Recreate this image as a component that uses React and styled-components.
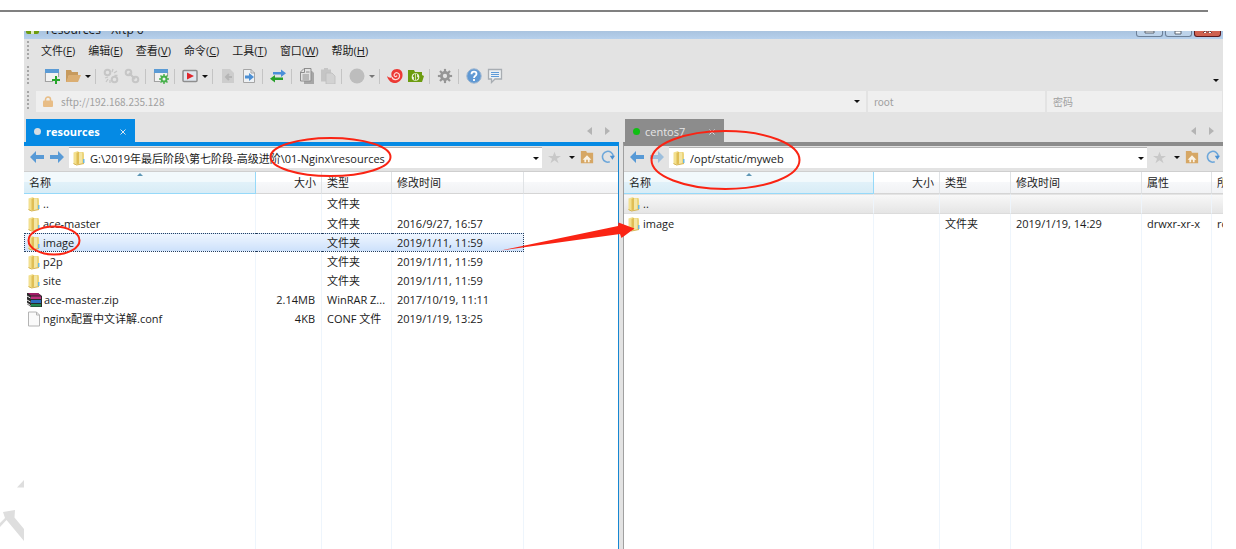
import React from 'react';
import styled, { createGlobalStyle } from 'styled-components';

const GlobalStyle = createGlobalStyle`
  * {
    box-sizing: border-box;
  }

  body {
    margin: 0;
    background: #fff;
    overflow: hidden;
  }

  body, button, input, table {
    font-family: 'Open Sans', 'Noto Sans CJK SC', sans-serif;
    font-size: 11px;
    line-height: 16px;
    color: #1b1b1b;
  }

  button, input {
    border: 0;
    padding: 0;
    margin: 0;
    background: none;
    outline: none;
  }
`;

const Page = styled.div`
  position: relative;
  min-height: 100vh;
  padding-top: 10px;
  display: flex;
  flex-direction: column;
`;

const Rule = styled.hr`
  width: auto;
  height: 2px;
  margin: 0 28px 19px 0;
  border: 0;
  background: #808080;
`;

const Window = styled.main`
  flex: 1;
  margin: 0 13px 0 24px;
  display: flex;
  flex-direction: column;
  background: #e3e3e3;
`;

const TitleBar = styled.header`
  height: 8px;
  padding-left: 2px;
  display: flex;
  align-items: flex-end;
  gap: 7px;
  overflow: hidden;
  background: linear-gradient(#a9c3df, #b6d0ec);
`;

const AppMark = styled.span`
  width: 13px;
  height: 18px;
  margin-bottom: 5px;
  border-radius: 2px;
  background: linear-gradient(90deg, #6d9c10 35%, #dfe9c6 35%, #dfe9c6 60%, #6d9c10 60%);
`;

const Title = styled.span`
  flex: 1;
  font-size: 12px;
  line-height: 12px;
  padding-bottom: 3px;
`;

const WinButtons = styled.div`
  align-self: flex-start;
  display: flex;
  gap: 2px;
  margin-right: 2px;
`;

const WinButton = styled.button`
  width: 27px;
  height: 6px;
  display: flex;
  justify-content: center;
  border: 1px solid ${(p) => (p.$close ? '#5a1a1f' : '#6d8199')};
  border-top: 0;
  border-radius: 0 0 3px 3px;
  background: ${(p) => (p.$close ? '#cf6250' : '#bdd3ea')};
`;

const MenuBar = styled.nav`
  height: 24px;
  padding-left: 3px;
  display: flex;
  align-items: center;
`;

const Grip = styled.span`
  width: 2px;
  height: 20px;
  background: repeating-linear-gradient(#a6a6a6 0 2px, #e3e3e3 2px 4px);
`;

const MenuItems = styled.div`
  display: flex;
  gap: 13px;
  margin-left: 12px;
`;

const MenuButton = styled.button`
  white-space: nowrap;
`;

const ToolBar = styled.div`
  height: 26px;
  padding: 0 3px;
  display: flex;
  align-items: center;
`;

const Tools = styled.div`
  flex: 1;
  display: flex;
  align-items: center;
  margin-left: 12px;
`;

const ToolButton = styled.button`
  width: 21px;
  height: 20px;
  display: flex;
  align-items: center;
  justify-content: center;
`;

const CaretButton = styled.button`
  width: 9px;
  height: 20px;
  display: flex;
  align-items: center;
  justify-content: center;
`;

const Caret = styled.span`
  border: 3px solid transparent;
  border-top-color: ${(p) => p.$color || '#111'};
  border-bottom: 0;
`;

const Separator = styled.span`
  width: 1px;
  height: 15px;
  margin: 0 4px 0 3px;
  background: #c4c4c4;
`;

const Overflow = styled.button`
  align-self: flex-end;
  padding: 0 1px 7px;
  line-height: 3px;
  display: flex;
`;

const ConnectBar = styled.form`
  height: 24px;
  padding: 2px 1px 1px 3px;
  display: flex;
  gap: 7px;
`;

const Fields = styled.div`
  flex: 1;
  display: grid;
  grid-template-columns: minmax(0, 830fr) minmax(0, 177fr) minmax(0, 175fr);
  gap: 2px;
`;

const Field = styled.label`
  height: 21px;
  padding: 0 6px;
  display: flex;
  align-items: center;
  gap: 7px;
  background: #efefef;

  input {
    flex: 1;
    min-width: 0;
    font-family: 'Noto Sans CJK SC', sans-serif;
    font-size: 10px;
    color: #a0a0a0;
  }

  input::placeholder {
    color: #a0a0a0;
  }
`;

const Panels = styled.div`
  flex: 1;
  display: grid;
  grid-template-columns: minmax(0, 595fr) minmax(0, 600fr);
  gap: 4px;
  padding-top: 6px;
`;

const Panel = styled.section`
  min-width: 0;
  display: flex;
  flex-direction: column;
`;

const TabStrip = styled.div`
  height: 23px;
  padding: 0 9px 0 2px;
  display: flex;
  align-items: center;
  justify-content: space-between;
`;

const Tab = styled.button`
  width: ${(p) => (p.$active ? 109 : 99)}px;
  height: 23px;
  padding: 2px 9px 0 8px;
  display: flex;
  align-items: center;
  gap: 5px;
  color: ${(p) => (p.$active ? '#fff' : '#e6e6e6')};
  font-weight: ${(p) => (p.$active ? 700 : 400)};
  background: ${(p) => (p.$active ? '#058ae4' : '#8c8c8c')};
`;

const Dot = styled.span`
  width: 7px;
  height: 7px;
  border-radius: 50%;
  background: ${(p) => p.$color};
`;

const TabLabel = styled.span`
  flex: 1;
  text-align: left;
`;

const TabNav = styled.div`
  display: flex;
  gap: 13px;
`;

const NavButton = styled.button`
  border: 4px solid transparent;
  ${(p) =>
    p.$dir === 'left'
      ? 'border-right: 5px solid #b4b4b4; border-left: 0;'
      : 'border-left: 5px solid #b4b4b4; border-right: 0;'}
`;

const PanelBody = styled.div`
  flex: 1;
  display: flex;
  flex-direction: column;
  border-top: 4px solid ${(p) => (p.$active ? '#058ae4' : '#8c8c8c')};
  border-right: ${(p) => (p.$active ? '1px solid #1787d2' : '0')};
  border-left: ${(p) => (p.$active ? '0' : '1px solid #a0a0a0')};
`;

const PathRow = styled.div`
  height: 26px;
  padding: 1px 0 0 5px;
  display: flex;
  align-items: flex-start;
  border-bottom: 1px solid #cfcfcf;
`;

const PathButton = styled.button`
  width: ${(p) => p.$width || 20}px;
  height: 20px;
  display: flex;
  align-items: center;
  justify-content: center;
`;

const PathField = styled.label`
  flex: 1;
  min-width: 0;
  height: 21px;
  padding: 0 3px;
  display: flex;
  align-items: center;
  gap: 4px;
  background: #fff;
  border-top: 1px solid #b4b4b4;

  input {
    flex: 1;
    min-width: 0;
    padding-top: 2px;
  }
`;

const List = styled.div`
  flex: 1;
  display: flex;
  background: #fff;
  overflow: hidden;
`;

const Table = styled.table`
  width: 100%;
  flex: 1;
  table-layout: fixed;
  border-spacing: 0;
  white-space: nowrap;
`;

const Th = styled.th`
  position: relative;
  height: 22px;
  padding: 0 5px;
  overflow: hidden;
  font-weight: 400;
  text-align: ${(p) => (p.$right ? 'right' : 'left')};
  border-right: 1px solid ${(p) => (p.$sorted ? '#96d9f9' : '#e0e3e6')};
  border-bottom: 1px solid ${(p) => (p.$sorted ? '#96d9f9' : '#d5d5d5')};
  background: ${(p) =>
    p.$sorted
      ? 'linear-gradient(#f2f9fc 45%, #e1f1f9 50%, #d8ecf6)'
      : 'linear-gradient(#fff 45%, #f7f8fa 50%, #f1f2f4)'};

  &:last-child {
    border-right: 0;
  }
`;

const SortMark = styled.span`
  position: absolute;
  top: 1px;
  left: 50%;
  margin-left: -3px;
  border: 3px solid transparent;
  border-bottom-color: #5f97b5;
  border-top: 0;
`;

const Row = styled.tr`
  td {
    height: 19px;
    padding: 0 6px 0 5px;
    overflow: hidden;
    border: 0 solid #eef5fc;
    border-right-width: 1px;
  }

  td:first-child {
    padding-left: 3px;
  }

  td:last-child {
    border-right-width: 0;
  }

  &:first-child td {
    height: 20px;
  }

  ${(p) =>
    p.$selected &&
    `
    td:not(:last-child) {
      border: 0 dotted #26405f;
      border-width: 1px 0;
      background: linear-gradient(#eff6ff, #cde1fb);
    }
    td:first-child { border-left-width: 1px; padding-left: 2px; }
    td:nth-last-child(2) { border-right-width: 1px; }
  `}

  ${(p) =>
    p.$focused &&
    `
    td {
      border-top: 1px solid #e4e4e4;
      border-bottom: 1px solid #dcdcdc;
      background: linear-gradient(#f8f8f8, #e5e5e5);
    }
  `}
`;

const SizeCell = styled.td`
  text-align: right;
`;

const Filler = styled.tr`
  td {
    padding: 0;
    border-right: 1px solid #eef5fc;
  }

  td:last-child {
    border-right: 0;
  }
`;

const FileName = styled.span`
  display: flex;
  align-items: center;
  gap: 2px;
`;

const Marks = styled.svg`
  position: absolute;
  top: 0;
  left: 0;
  pointer-events: none;
`;

const Svg = ({ size = 16, children }) => (
  <svg width={size} height={size} viewBox="0 0 16 16" fill="none" aria-hidden="true">
    {children}
  </svg>
);

const gearTeeth = [0, 45, 90, 135, 180, 225, 270, 315];

const Gear = ({ x = 8, y = 8, r = 4, color, hole = '#e3e3e3' }) => (
  <g transform={`translate(${x} ${y})`}>
    {gearTeeth.map((a) => (
      <rect key={a} x={-r / 4} y={-r * 1.65} width={r / 2} height={r} fill={color} transform={`rotate(${a})`} />
    ))}
    <circle r={r * 1.15} fill={color} />
    <circle r={r / 2} fill={hole} />
  </g>
);

const Chain = ({ broken }) => (
  <Svg>
    <g stroke="#c6c6c6" strokeWidth="2">
      <circle cx="4.5" cy="4.5" r="2.8" />
      <circle cx="11.5" cy="11.5" r="2.8" />
      {broken ? (
        <path strokeWidth="1.3" d="M9 4l1-3M11 5l3-2M11.500 7.500h3M2 10l3-1M3 14l2-3M7 15v-3" />
      ) : (
        <path d="M5 5l6 6" />
      )}
    </g>
  </Svg>
);

const icons = {
  newSession: (
    <Svg>
      <path d="M1.500 4v9.500H9M14.500 4v5" stroke="#a2a2a2" strokeWidth="1.200" />
      <path d="M1 1h14v4H1z" fill="#5b9bd5" />
      <path d="M2 5h12v4h-3v4H2z" fill="#f2f2f2" />
      <path d="M12 8v8M8 12h8" stroke="#26a52b" strokeWidth="2" />
    </Svg>
  ),
  open: (
    <Svg>
      <path d="M1 2h5l1 2h6v3H4l-2 7H1z" fill="#c79a5d" />
      <path d="M4 7h12l-3 7H1z" fill="#dbae72" />
    </Svg>
  ),
  props: (
    <Svg>
      <path d="M1.500 4v9.500H7M14.500 4v4" stroke="#a2a2a2" strokeWidth="1.200" />
      <path d="M1 1h14v4H1z" fill="#5b9bd5" />
      <path d="M2 5h12v8H2z" fill="#f2f2f2" />
      <Gear x={11} y={11} r={3} color="#47b04b" hole="#f2f2f2" />
    </Svg>
  ),
  run: (
    <Svg>
      <rect x="1" y="2.500" width="14" height="11" rx="1" stroke="#8e8e8e" strokeWidth="1.500" fill="#dfe6ee" />
      <path d="M5 4.500l7 3.500-7 3.500z" fill="#e0262d" />
    </Svg>
  ),
  receive: (
    <Svg>
      <path d="M2 1h8l4 4v10H2z" fill="#cdcdcd" />
      <path d="M12 9H7m2-3L6 9l3 3" stroke="#b5b5b5" strokeWidth="2" />
    </Svg>
  ),
  send: (
    <Svg>
      <path d="M2.500 1.500H10l3.500 3.500v9.500h-11z" fill="#eef1f4" stroke="#a5a5a5" />
      <path d="M10 1v4h4" stroke="#a5a5a5" />
      <path d="M4 7.500h4V5l5 4-5 4v-2.500H4z" fill="#4b8fd4" />
    </Svg>
  ),
  transfer: (
    <Svg>
      <path d="M3 4h8V1.500L16 5.200 11 9V6.500H3z" fill="#4a8fd8" />
      <path d="M13 9.500H5V7L0 10.800 5 14.500V12h8z" fill="#27a02a" />
    </Svg>
  ),
  copy: (
    <Svg>
      <path d="M5 3h8l2 2v11H5z" fill="#a6a6a6" />
      <path d="M5 .5h7v12.500H1.500V4z" fill="#e2e2e2" stroke="#8d8d8d" />
      <path d="M5.500 1v3.500H2M3.500 7h6.500M3.500 9h6.500M3.500 11h6.500M7 4h3.500" stroke="#8d8d8d" />
    </Svg>
  ),
  paste: (
    <Svg>
      <path d="M1 1.500h10v12H1zM4 0h4v3H4z" fill="#c5c5c5" />
      <path d="M6 5h6l3 3v8H6z" fill="#d2d2d2" stroke="#bcbcbc" strokeWidth=".8" />
    </Svg>
  ),
  stop: (
    <Svg>
      <circle cx="8" cy="8" r="7.500" fill="#bdbdbd" />
    </Svg>
  ),
  xshell: (
    <Svg>
      <path d="M0 8c2 2 4 2 5 1C3 4 6 1 10 1c4 0 6 3 5.500 7C15 12 11 15.500 7 15 3.500 14.600 1 12 0 8z" fill="#ec3a35" />
      <path d="M5 9c1 4 7 3 7.500-.5C13 5 9 3.500 7.500 6S9.500 9.500 10 7.500" stroke="#ffd9d5" strokeWidth="1.200" />
    </Svg>
  ),
  xftp: (
    <Svg>
      <path d="M0 2h6l1 2h7v3l2 1-2 6H0z" fill="#6d9c10" />
      <circle cx="7.500" cy="9" r="3.800" fill="#f3f7e9" />
      <path d="M6.500 12V7L5 8.500M8.500 6v5L10 9.500" stroke="#6d9c10" strokeWidth="1.300" />
    </Svg>
  ),
  gear: (
    <Svg>
      <Gear r={4.3} color="#969696" />
    </Svg>
  ),
  help: (
    <Svg>
      <circle cx="8" cy="8" r="7.200" fill="#6099d4" stroke="#9db6d0" />
      <path d="M5.500 6.200C5.500 2.800 10.500 3 10.500 6 10.500 7.800 8 7.800 8 10M8 11v2" stroke="#fff" strokeWidth="1.800" />
    </Svg>
  ),
  chat: (
    <Svg>
      <path d="M1.500 1.500h13v9.500H8l-3.500 3.500V11h-3z" fill="#edf0f3" stroke="#a8adb2" strokeWidth="1.300" />
      <path d="M4 4.500h8M4 6.500h8M4 8.500h8" stroke="#5e9ad7" />
    </Svg>
  ),
};

const toolItems = [
  ['newSession', '新建'],
  ['open', '打开'],
  ['caret'],
  ['sep'],
  ['disconnect', '断开'],
  ['reconnect', '重新连接'],
  ['sep'],
  ['props', '属性'],
  ['sep'],
  ['run', '运行'],
  ['caret'],
  ['sep'],
  ['receive', '接收'],
  ['send', '发送'],
  ['sep'],
  ['transfer', '传输'],
  ['sep'],
  ['copy', '复制'],
  ['paste', '粘贴'],
  ['sep'],
  ['stop', '停止'],
  ['caret', '#777'],
  ['sep'],
  ['xshell', 'Xshell'],
  ['xftp', 'Xftp'],
  ['sep'],
  ['gear', '选项'],
  ['sep'],
  ['help', '帮助'],
  ['chat', '反馈'],
];

const menus = [
  ['文件', 'F'],
  ['编辑', 'E'],
  ['查看', 'V'],
  ['命令', 'C'],
  ['工具', 'T'],
  ['窗口', 'W'],
  ['帮助', 'H'],
];

const FolderIcon = () => (
  <svg width="14" height="16" viewBox="0 0 14 16" aria-hidden="true">
    <path d="M5 2h6.500l.5 2v9.500L5 14z" fill="#ecd57c" />
    <path d="M1.500 2.500L6 1v12.500l-2 1.500-2.500-1z" fill="#f3e08f" />
    <path d="M4.500 3L7 1.500v12L4.500 15z" fill="#e0be55" />
    <path d="M7 2.500h3V14H7z" fill="#f4e6a4" />
    <path d="M1.500 13.500l3 1.500 7.500-1.500" fill="none" stroke="#d6b451" />
    <path d="M11 9h1.500v4H11z" fill="#6bb8e2" />
  </svg>
);

const ZipIcon = () => (
  <svg width="15" height="16" viewBox="0 0 15 16" aria-hidden="true">
    <path d="M0 1h11l4 3v11H4L0 12z" fill="#2b2b2b" />
    <path d="M1 1h10l3 2.500H4z" fill="#a01c66" />
    <path d="M4 4.500h10v2.500H4z" fill="#c2307f" />
    <path d="M4 8h10v3H4z" fill="#2a6fc0" />
    <path d="M4 12h10v2.500H4z" fill="#23894f" />
    <path d="M0 4l3.500 2M0 8l3.500 2M0 11l3.500 2.500" stroke="#eee" />
  </svg>
);

const FileIcon = () => (
  <svg width="14" height="16" viewBox="0 0 14 16" aria-hidden="true">
    <path d="M1.500 1h8l3 3v11h-11z" fill="#fafafa" stroke="#b4b4b4" />
    <path d="M9.500 1v3h3" fill="none" stroke="#b4b4b4" />
  </svg>
);

const fileIcons = { folder: FolderIcon, zip: ZipIcon, file: FileIcon };

const BackArrow = ({ flip, faded }) => (
  <svg width="14" height="14" viewBox="0 0 14 14" opacity={faded ? 0.5 : 1} aria-hidden="true">
    <path
      d="M0 7l6-6v4h8v4H6v4z"
      fill="#589ad6"
      transform={flip ? 'rotate(180 7 7)' : undefined}
    />
  </svg>
);

const localFiles = [
  { icon: 'folder', name: '..', type: '文件夹' },
  { icon: 'folder', name: 'ace-master', type: '文件夹', time: '2016/9/27, 16:57' },
  { icon: 'folder', name: 'image', type: '文件夹', time: '2019/1/11, 11:59', selected: true },
  { icon: 'folder', name: 'p2p', type: '文件夹', time: '2019/1/11, 11:59' },
  { icon: 'folder', name: 'site', type: '文件夹', time: '2019/1/11, 11:59' },
  { icon: 'zip', name: 'ace-master.zip', size: '2.14MB', type: 'WinRAR Z...', time: '2017/10/19, 11:11' },
  { icon: 'file', name: 'nginx配置中文详解.conf', size: '4KB', type: 'CONF 文件', time: '2019/1/19, 13:25' },
];

const remoteFiles = [
  { icon: 'folder', name: '..', focused: true, extra: ['', ''] },
  { icon: 'folder', name: 'image', type: '文件夹', time: '2019/1/19, 14:29', extra: ['drwxr-xr-x', 'root'] },
];

const FileTable = ({ widths, heads, files }) => (
  <Table>
    <colgroup>
      {widths.map((w, i) => (
        <col key={i} width={w} />
      ))}
      <col />
    </colgroup>
    <thead>
      <tr>
        {heads.map((h, i) => (
          <Th key={i} $sorted={i === 0} $right={i === 1}>
            {i === 0 && <SortMark />}
            {h}
          </Th>
        ))}
      </tr>
    </thead>
    <tbody>
      {files.map((f) => {
        const Icon = fileIcons[f.icon];
        return (
          <Row key={f.name} $selected={f.selected} $focused={f.focused}>
            <td>
              <FileName>
                <Icon />
                {f.name}
              </FileName>
            </td>
            <SizeCell>{f.size}</SizeCell>
            <td>{f.type}</td>
            <td>{f.time}</td>
            {(f.extra || ['']).map((e, i) => (
              <td key={i}>{e}</td>
            ))}
          </Row>
        );
      })}
      <Filler>
        {heads.map((h, i) => (
          <td key={i} />
        ))}
      </Filler>
    </tbody>
  </Table>
);

const FilePanel = ({ active, tab, dot, path, children }) => (
  <Panel>
    <TabStrip>
      <Tab $active={active}>
        <Dot $color={dot} />
        <TabLabel>{tab}</TabLabel>
        <svg width="6" height="6" viewBox="0 0 6 6" stroke="#d9e6f0" aria-hidden="true">
          <path d="M.5.5l5 5M5.500.5l-5 5" />
        </svg>
      </Tab>
      <TabNav>
        <NavButton $dir="left" aria-label="上一个标签" />
        <NavButton $dir="right" aria-label="下一个标签" />
      </TabNav>
    </TabStrip>
    <PanelBody $active={active}>
      <PathRow>
        <PathButton aria-label="后退" $width={15}>
          <BackArrow />
        </PathButton>
        <PathButton aria-label="前进" $width={25}>
          <BackArrow flip faded={!active} />
        </PathButton>
        <PathField>
          <FolderIcon />
          <input aria-label="路径" defaultValue={path} />
          <Caret />
        </PathField>
        <PathButton aria-label="收藏" $width={25}>
          <Svg size={13}>
            <path d="M8 1l2 5h6l-5 3.500 2 5.500-5-3.500L3 15l2-5.500L0 6h6z" fill="#c8c8c8" />
          </Svg>
        </PathButton>
        <CaretButton aria-label="收藏列表">
          <Caret />
        </CaretButton>
        <PathButton aria-label="上级目录" $width={22}>
          <Svg size={14}>
            <path d="M1 1h6l1 2h7v12H1z" fill="#d6a765" />
            <path d="M8 6l5 5h-2v3H9v-3H7v3H5v-3H3z" fill="#faf3e6" />
          </Svg>
        </PathButton>
        <PathButton aria-label="刷新">
          <Svg size={14}>
            <path d="M10 13.500A6.200 6.200 0 1 1 14 7" stroke="#6da7da" strokeWidth="1.800" />
            <path d="M10 6.500h6L13 11z" fill="#4a90d2" />
          </Svg>
        </PathButton>
      </PathRow>
      <List>{children}</List>
    </PanelBody>
  </Panel>
);

const renderTool = ([kind, label], i) => {
  if (kind === 'sep') return <Separator key={i} />;
  if (kind === 'caret') {
    return (
      <CaretButton key={i} aria-label="更多">
        <Caret $color={label} />
      </CaretButton>
    );
  }
  return (
    <ToolButton key={i} title={label} aria-label={label}>
      {kind === 'disconnect' && <Chain broken />}
      {kind === 'reconnect' && <Chain />}
      {icons[kind]}
    </ToolButton>
  );
};

const App = () => {
  return (
    <>
      <GlobalStyle />
      <Page>
        <Rule />
        <Window>
          <TitleBar>
            <AppMark />
            <Title>resources - Xftp 6</Title>
            <WinButtons>
              <WinButton aria-label="最小化">
                <svg width="11" height="3"><path d="M1 0h9v2H1z" fill="#fff" stroke="#5b6470" /></svg>
              </WinButton>
              <WinButton aria-label="最大化">
                <svg width="9" height="4"><path d="M1 0h6v3H1z" fill="#fff" stroke="#5b6470" /></svg>
              </WinButton>
              <WinButton aria-label="关闭" $close>
                <svg width="11" height="3"><path d="M1 2l2-2h1l1 2M6 2l1-2h1l2 2" fill="#fff" stroke="#6b3a3a" /></svg>
              </WinButton>
            </WinButtons>
          </TitleBar>
          <MenuBar>
            <Grip />
            <MenuItems>
              {menus.map(([text, key]) => (
                <MenuButton key={key}>
                  {text}(<u>{key}</u>)
                </MenuButton>
              ))}
            </MenuItems>
          </MenuBar>
          <ToolBar>
            <Grip />
            <Tools>{toolItems.map(renderTool)}</Tools>
            <Overflow aria-label="工具栏选项">
              <Caret />
            </Overflow>
          </ToolBar>
          <ConnectBar>
            <Grip />
            <Fields>
              <Field>
                <svg width="12" height="12" viewBox="0 0 12 12" aria-hidden="true">
                  <path d="M3.500 5V3.500a2.500 2.500 0 0 1 5 0V5" fill="none" stroke="#e8bd86" strokeWidth="1.500" />
                  <rect x="1" y="4.500" width="10" height="6.500" rx="1" fill="#e8bd86" />
                </svg>
                <input aria-label="主机" defaultValue="sftp://192.168.235.128" />
                <Caret />
              </Field>
              <Field>
                <input aria-label="用户名" defaultValue="root" />
              </Field>
              <Field>
                <input aria-label="密码" type="password" placeholder="密码" />
              </Field>
            </Fields>
          </ConnectBar>
          <Panels>
            <FilePanel active tab="resources" dot="#d5dde3" path="G:\2019年最后阶段\第七阶段-高级进阶\01-Nginx\resources">
              <FileTable
                widths={[232, 66, 70, 132]}
                heads={['名称', '大小', '类型', '修改时间', '']}
                files={localFiles}
              />
            </FilePanel>
            <FilePanel tab="centos7" dot="#0fbf12" path="/opt/static/myweb">
              <FileTable
                widths={[250, 66, 71, 131, 70]}
                heads={['名称', '大小', '类型', '修改时间', '属性', '所有者']}
                files={remoteFiles}
              />
            </FilePanel>
          </Panels>
        </Window>
        <Marks width="820" height="549" viewBox="0 0 820 549" aria-hidden="true">
          <g fill="#dedede">
            <path d="M17 487.500l7-7.500v7.500z" />
            <path d="M3 512l12-2-.5 7.500L24 529v12L6.500 520 0 527v-4l5-5z" />
          </g>
          <g fill="none" stroke="#fa2414" strokeWidth="2">
            <ellipse cx="330.500" cy="157" rx="60" ry="19" />
            <ellipse cx="54" cy="240.500" rx="25.500" ry="14" />
            <ellipse cx="725.500" cy="160" rx="74" ry="29" />
          </g>
          <path d="M501 250.500L618 226l.5-3.500L634.500 228.500l-13 9.500-1.500-4z" fill="#fa2414" />
        </Marks>
      </Page>
    </>
  );
};

export default App;
